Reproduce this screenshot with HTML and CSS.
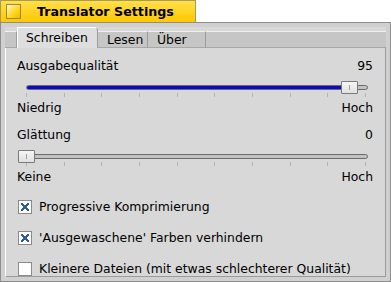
FILE: index.html
```html
<!DOCTYPE html>
<html lang="de">
<head>
  <meta charset="UTF-8" />
  <title>Translator Settings</title>
  <link rel="stylesheet" href="styles.css">
</head>
<body>
  <div class="window">
    <div class="title-tab">
      <span class="close-btn"></span>
      <span class="title">Translator Settings</span>
    </div>
    <div class="frame">
      <div class="panel">
        <!-- Tabs -->
        <div class="tabs">
          <div class="tab-lead"></div>
          <div class="tab active">Schreiben</div>
          <div class="tab">Lesen</div>
          <div class="tab">Über</div>
          <div class="tab-rest"></div>
        </div>

        <div class="tab-body">
          <div class="row">
            <span>Ausgabequalität</span>
            <span>95</span>
          </div>
          <div class="slider">
            <div class="rail">
              <div class="bar"><div class="fill" style="width:95%"></div></div>
              <div class="thumb" style="left:95%"></div>
              <div class="ticks">
                <i></i><i></i><i></i><i></i><i></i><i></i><i></i><i></i><i></i><i></i>
              </div>
            </div>
          </div>
          <div class="row limits">
            <span>Niedrig</span>
            <span>Hoch</span>
          </div>

          <div class="row second">
            <span>Glättung</span>
            <span>0</span>
          </div>
          <div class="slider">
            <div class="rail">
              <div class="bar"></div>
              <div class="thumb" style="left:0%"></div>
              <div class="ticks">
                <i></i><i></i><i></i><i></i><i></i><i></i><i></i><i></i><i></i><i></i>
              </div>
            </div>
          </div>
          <div class="row limits">
            <span>Keine</span>
            <span>Hoch</span>
          </div>

          <div class="checks">
            <div class="check">
              <span class="box checked"></span>
              <span>Progressive Komprimierung</span>
            </div>
            <div class="check">
              <span class="box checked"></span>
              <span>'Ausgewaschene' Farben verhindern</span>
            </div>
            <div class="check">
              <span class="box"></span>
              <span>Kleinere Dateien (mit etwas schlechterer Qualität)</span>
            </div>
          </div>
        </div>
      </div>
    </div>
  </div>
</body>
</html>
```

FILE: styles.css
```css
* {
  box-sizing: border-box;
}

body {
  margin: 0;
  background: #ffffff;
  font-family: "DejaVu Sans", sans-serif;
  font-size: 12.4px;
  color: #000000;
}

.window {
  width: 391px;
  height: 282px;
}

/* Yellow title tab */
.title-tab {
  width: 196px;
  height: 22px;
  display: flex;
  align-items: center;
  gap: 16px;
  padding-left: 5px;
  background: linear-gradient(#ffe04a, #ffc800);
  border: 1px solid #a89a5a;
  border-bottom: none;
}

.close-btn {
  width: 15px;
  height: 15px;
  border: 1px solid #9a8a40;
  background: linear-gradient(135deg, #fff6c8, #ffd000 70%, #f0b800);
}

.title {
  font-weight: bold;
  font-size: 12.7px;
}

/* Window frame */
.frame {
  height: 260px;
  border: 1px solid #8e8e8e;
  background: #d0d0d0;
  padding: 4px;
}

.panel {
  height: 100%;
  background: #d8d8d8;
  display: flex;
  flex-direction: column;
}

.tabs {
  display: flex;
  height: 21px;
  align-items: flex-end;
}

.tab-lead, .tab-rest, .tab {
  height: 17px;
  background: #c6c6c6;
  border-top: 1px solid #f0f0f0;
  border-right: 1px solid #9c9c9c;
  border-bottom: 1px solid #a8a8a8;
}

.tab-lead {
  width: 12px;
}

.tab-rest {
  flex: 1;
  border-right: none;
}

.tab {
  padding: 0 0 0 9px;
  line-height: 15px;
}

.tab:nth-child(3) {
  width: 50px;
}

.tab:nth-child(4) {
  width: 58px;
}

.tab.active {
  width: 81px;
  height: 21px;
  padding-left: 8px;
  line-height: 20px;
  background: #dedede;
  border-top: 1px solid #ffffff;
  border-left: 1px solid #ffffff;
  border-bottom: none;
  border-radius: 0 4px 0 0;
}

.tab-body {
  flex: 1;
  padding: 11px 12px 0 11px;
  border-left: 1px solid #ffffff;
  border-right: 1px solid #9c9c9c;
  border-bottom: 1px solid #9c9c9c;
}

.row {
  display: flex;
  justify-content: space-between;
  line-height: 14px;
}

.limits {
  margin-top: 4px;
}

.second {
  margin-top: 13px;
}

/* Sliders */
.slider {
  margin: 8px 0 0 1px;
  width: 356px;
  padding: 0 8px;
}

.rail {
  position: relative;
  height: 16px;
}

.bar {
  position: relative;
  top: 4px;
  height: 5px;
  margin: 0 -2px 0 0;
  background: #c2c2c2;
  border: 1px solid #6a6a6a;
  border-radius: 3px;
  overflow: hidden;
}

.fill {
  height: 100%;
  background: #0a0ac8;
}

.thumb {
  position: absolute;
  top: 0;
  width: 17px;
  height: 13px;
  margin-left: -8px;
  background: linear-gradient(#f6f6f6, #e0e0e0);
  border: 1px solid #7a7a7a;
  border-radius: 1px;
}

.thumb::after {
  content: "";
  position: absolute;
  left: 7px;
  top: 3px;
  width: 1px;
  height: 5px;
  background: #a0a0a0;
}

.ticks {
  display: flex;
  justify-content: space-between;
  margin-top: 7px;
}

.ticks i {
  width: 1px;
  height: 4px;
  background: #b4b4b4;
}

/* Checkboxes */
.checks {
  margin-top: 16px;
  display: flex;
  flex-direction: column;
  gap: 17px;
}

.check {
  display: flex;
  align-items: center;
  gap: 7px;
  line-height: 14px;
  padding-left: 1px;
}

.box {
  width: 14px;
  height: 14px;
  border: 1px solid #8a8a8a;
  background: #ffffff;
  position: relative;
}

.box.checked::after {
  content: "";
  position: absolute;
  left: 2px;
  top: 2px;
  width: 8px;
  height: 8px;
  background:
    linear-gradient(45deg, transparent 38%, #2e5c9c 38%, #2e5c9c 62%, transparent 62%),
    linear-gradient(-45deg, transparent 38%, #2e5c9c 38%, #2e5c9c 62%, transparent 62%);
}
```
